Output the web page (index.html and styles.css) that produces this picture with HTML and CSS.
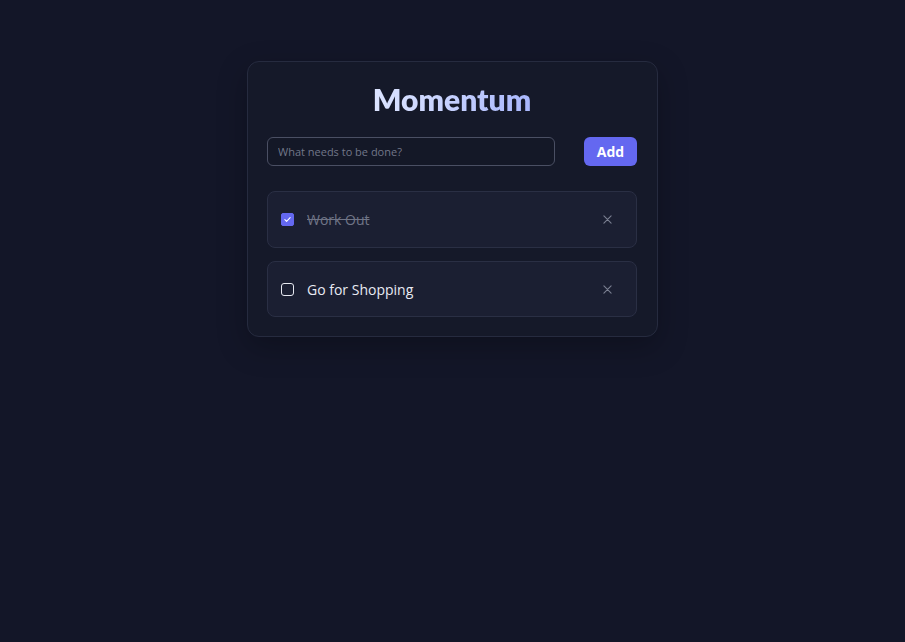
FILE: index.html
```html
<!DOCTYPE html>
<html lang="en">
<head>
<meta charset="utf-8">
<title>Momentum</title>
<link rel="stylesheet" href="styles.css">
</head>
<body>
<main class="card">
  <h1 class="title">Momentum</h1>
  <form class="add-form" onsubmit="return false">
    <input class="add-input" type="text" placeholder="What needs to be done?">
    <button class="add-btn" type="submit">Add</button>
  </form>
  <ul class="list">
    <li class="item done">
      <span class="check checked">
        <svg viewBox="0 0 12 12" width="9" height="9"><path d="M2.5 6.2l2.3 2.2 4.7-4.8" fill="none" stroke="#fff" stroke-width="1.5" stroke-linecap="round" stroke-linejoin="round"/></svg>
      </span>
      <span class="label">Work Out</span>
      <button class="remove" type="button">
        <svg viewBox="0 0 10 10" width="9" height="9"><path d="M1 1l8 8M9 1l-8 8" stroke="currentColor" stroke-width="1.2" stroke-linecap="round"/></svg>
      </button>
    </li>
    <li class="item">
      <span class="check"></span>
      <span class="label">Go for Shopping</span>
      <button class="remove" type="button">
        <svg viewBox="0 0 10 10" width="9" height="9"><path d="M1 1l8 8M9 1l-8 8" stroke="currentColor" stroke-width="1.2" stroke-linecap="round"/></svg>
      </button>
    </li>
  </ul>
</main>
</body>
</html>
```
FILE: styles.css
```css
* { box-sizing: border-box; }
html, body { margin: 0; padding: 0; }
body {
  background: #131628;
  font-family: "Open Sans", "Noto Sans", sans-serif;
  min-height: 642px;
  padding-top: 61px;
  display: flex;
  justify-content: center;
  align-items: flex-start;
}
.card {
  width: 411px;
  background: #151929;
  border: 1px solid #262b3f;
  border-radius: 12px;
  padding: 19px 20px 19px 19px;
  box-shadow: 0 10px 30px rgba(0,0,0,0.25);
}
.title {
  margin: 0 0 20px;
  text-align: center;
  font-family: "Lato", "Open Sans", sans-serif;
  font-size: 30px;
  line-height: 36px;
  font-weight: 800;
  background: linear-gradient(90deg, #dce4ff 0%, #c7d2fe 45%, #a9b7fc 100%);
  -webkit-background-clip: text;
  background-clip: text;
  color: transparent;
  width: fit-content;
  margin-left: auto;
  margin-right: auto;
}
.add-form {
  display: flex;
  justify-content: space-between;
  align-items: center;
  margin: 0 0 25px;
}
.add-input {
  width: 288px;
  height: 29px;
  background: #141827;
  border: 1px solid #4a4f63;
  border-radius: 6px;
  padding: 0 10px;
  color: #d4d7e2;
  font-family: inherit;
  font-size: 11px;
  outline: none;
}
.add-input::placeholder { color: #727789; }
.add-btn {
  width: 53px;
  height: 29px;
  border: none;
  border-radius: 6px;
  background: #6468f0;
  color: #fff;
  font-family: inherit;
  font-weight: 700;
  font-size: 14px;
  cursor: pointer;
}
.list {
  list-style: none;
  margin: 0;
  padding: 0;
  display: flex;
  flex-direction: column;
  gap: 13px;
}
.item {
  display: flex;
  align-items: center;
  height: 57px;
  padding: 0 24px 0 13px;
  background: #1b1f32;
  border: 1px solid #2a2f44;
  border-radius: 8px;
}
.item + .item { height: 56px; }
.check {
  width: 13px;
  height: 13px;
  border: 1.5px solid #e6e8f0;
  border-radius: 3px;
  display: flex;
  align-items: center;
  justify-content: center;
  flex-shrink: 0;
}
.check.checked {
  background: #6468f0;
  border-color: #6468f0;
  border-radius: 2px;
}
.label {
  flex: 1;
  margin-left: 13px;
  font-size: 14px;
  color: #e8eaf2;
}
.done .label {
  color: #6f7486;
  text-decoration: line-through;
}
.remove {
  background: none;
  border: none;
  color: #7b8092;
  padding: 0;
  display: flex;
  cursor: pointer;
}
```
